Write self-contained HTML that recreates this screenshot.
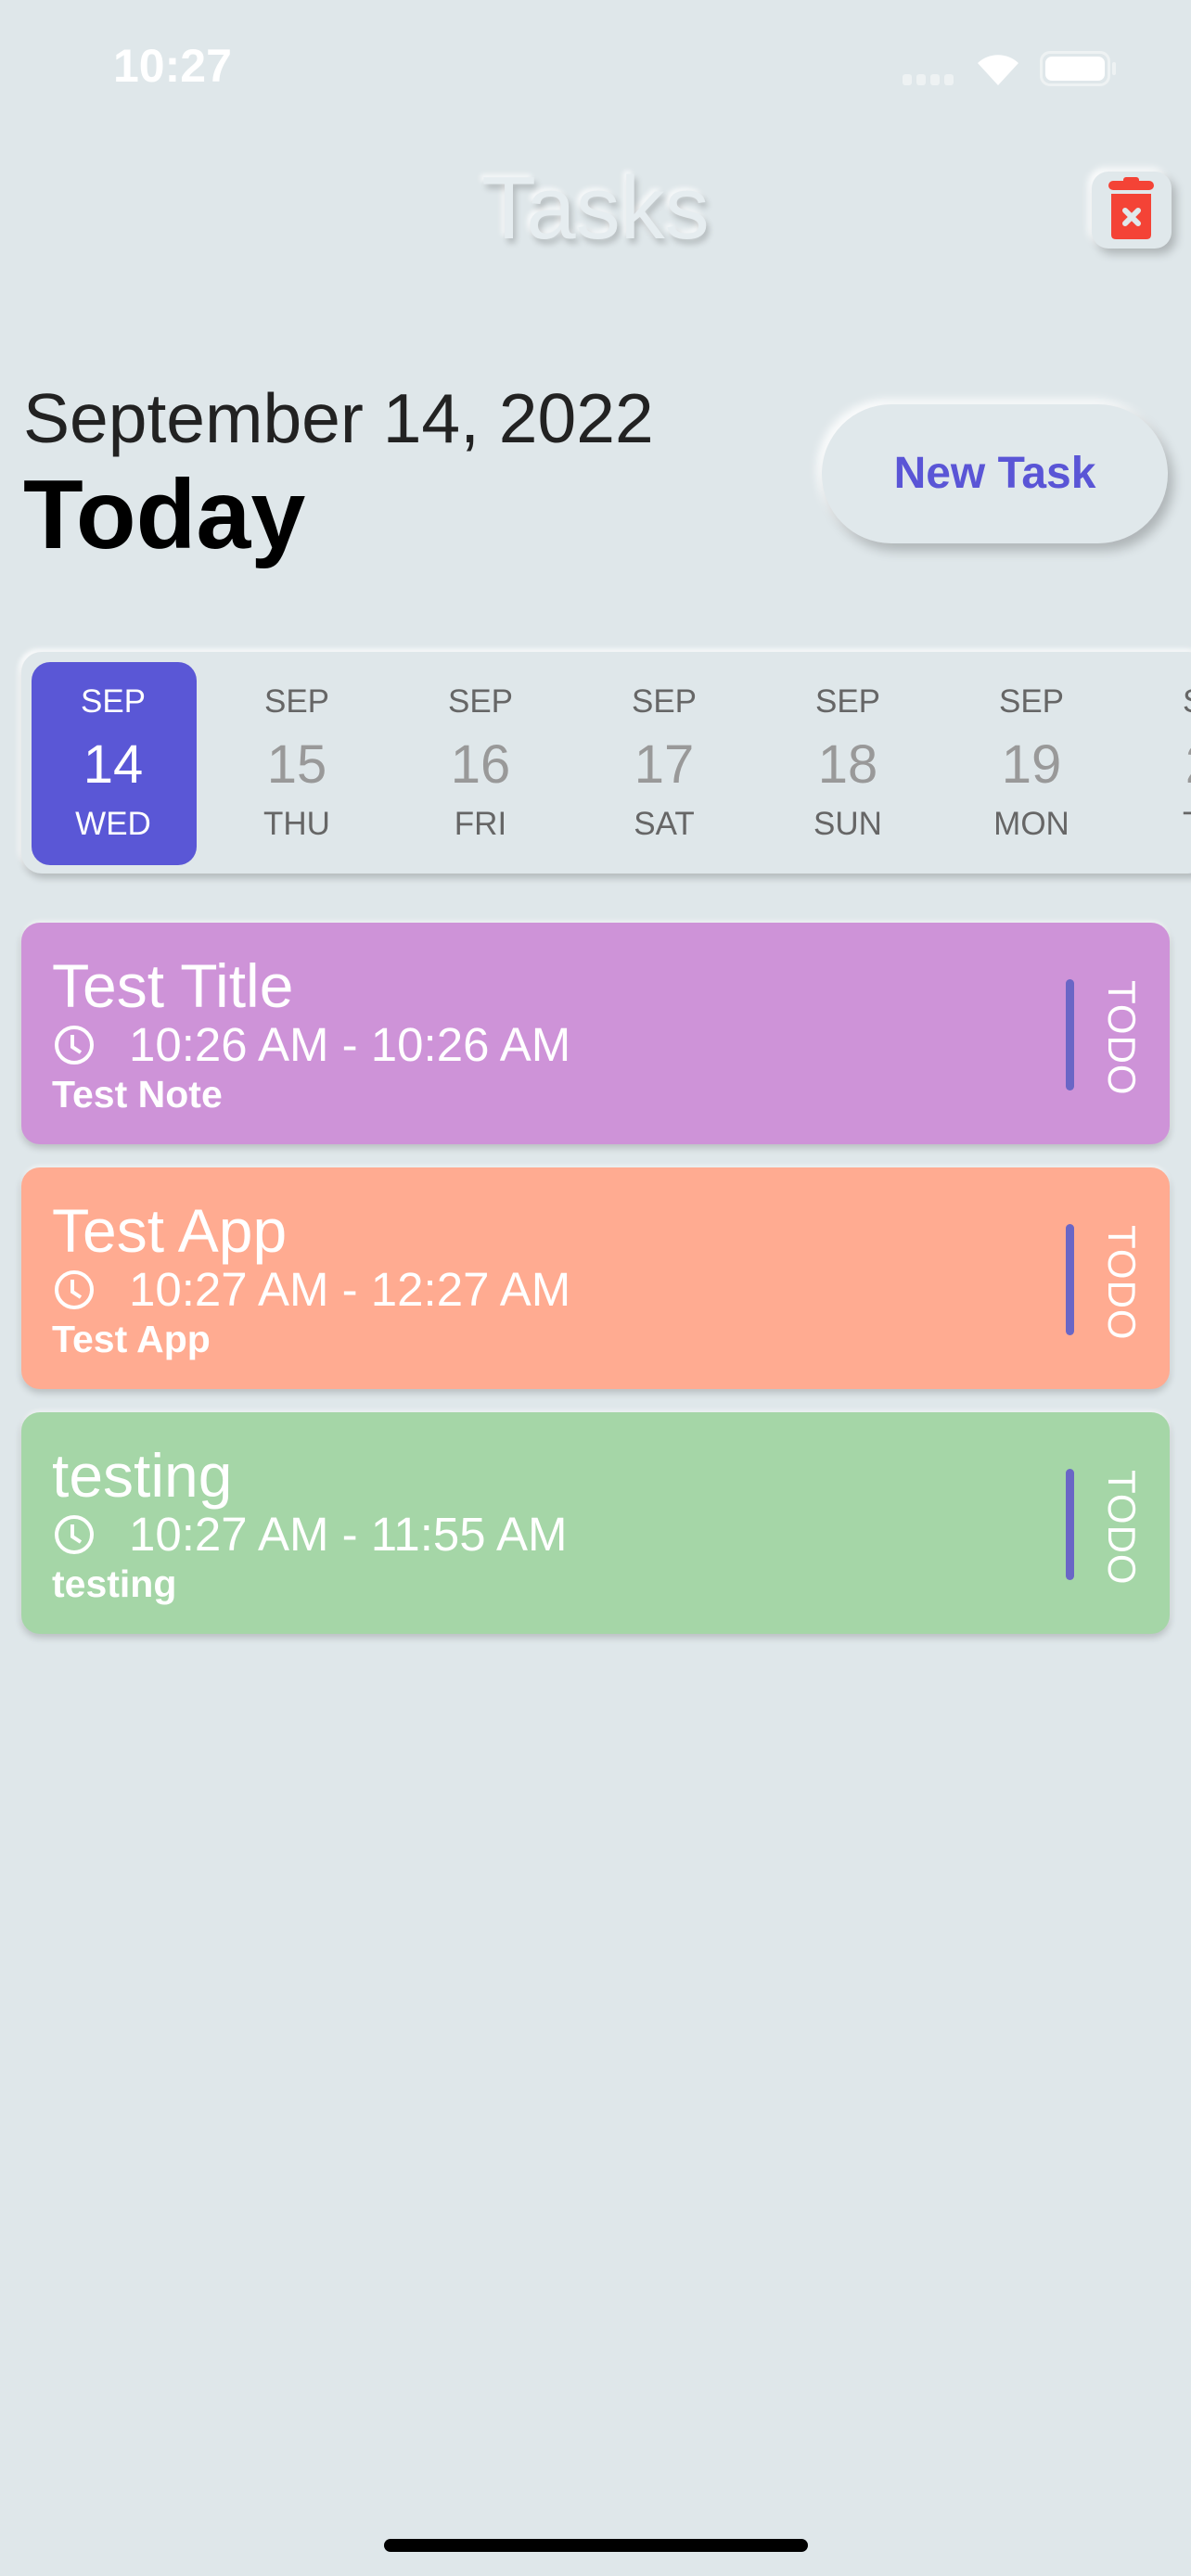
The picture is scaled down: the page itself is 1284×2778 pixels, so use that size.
<!DOCTYPE html>
<html><head><meta charset="utf-8"><style>
*{margin:0;padding:0;box-sizing:border-box}
body{width:1284px;height:2778px;background:#dfe7ea;font-family:"Liberation Sans",sans-serif;position:relative;overflow:hidden}
.a{position:absolute;white-space:nowrap}
.card{position:absolute;left:23px;width:1238px;height:239px;border-radius:20px;box-shadow:0 4px 8px rgba(0,0,0,.18),0 -2px 4px rgba(255,255,255,.7);color:#fff}
.card .t{position:absolute;left:33px;top:31px;font-size:66px;line-height:74px}
.card .tm{position:absolute;left:116px;top:102px;font-size:51px;line-height:60px}
.card .n{position:absolute;left:33px;top:160px;font-size:41px;line-height:50px;font-weight:bold}
.card svg{position:absolute;left:35px;top:110px}
.card .bar{position:absolute;left:1126px;top:61px;width:9px;height:120px;border-radius:5px;background:#6a66c6}
.card .todo{position:absolute;left:1128px;top:100px;width:116px;height:40px;font-size:42px;line-height:40px;transform:rotate(90deg);text-align:center;letter-spacing:1px}
.col{position:absolute;top:703px;width:198px;text-align:center}
.col .m{position:absolute;top:34px;width:100%;font-size:35px;color:#666}
.col .d{position:absolute;top:88px;width:100%;font-size:58px;color:#999}
.col .w{position:absolute;top:166px;width:100%;font-size:35px;color:#666}
</style></head><body>
<div class="a" style="left:122px;top:42px;font-size:50px;color:#fff;font-weight:bold">10:27</div>
<div class="a" style="left:973px;top:80px;width:58px;height:12px;">
<span style="position:absolute;left:0;top:0;width:10px;height:12px;border-radius:3px;background:#eef2f3"></span>
<span style="position:absolute;left:15px;top:0;width:10px;height:12px;border-radius:3px;background:#eef2f3"></span>
<span style="position:absolute;left:30px;top:0;width:10px;height:12px;border-radius:3px;background:#eef2f3"></span>
<span style="position:absolute;left:45px;top:0;width:10px;height:12px;border-radius:3px;background:#eef2f3"></span></div>
<svg class="a" style="left:1050px;top:52px" width="52" height="42" viewBox="0 0 52 42"><path d="M26 40 L4 16 A32 32 0 0 1 48 16 Z" fill="#fff"/></svg>
<div class="a" style="left:1121px;top:55px;width:76px;height:38px;border:3px solid #eef2f3;border-radius:11px"><div style="position:absolute;left:3px;top:3px;right:3px;bottom:3px;background:#fff;border-radius:7px"></div></div>
<div class="a" style="left:1199px;top:67px;width:4px;height:14px;background:#eef2f3;border-radius:2px"></div>

<div class="a" style="left:0;width:1284px;text-align:center;top:170px;font-size:96px;color:#e6edf0;text-shadow:3px 5px 7px rgba(0,0,0,.2),-3px -3px 6px rgba(255,255,255,.8)">Tasks</div>
<div class="a" style="left:1177px;top:185px;width:86px;height:83px;border-radius:18px;background:#e0e8eb;box-shadow:5px 6px 10px rgba(0,0,0,.22),-4px -4px 8px rgba(255,255,255,.9)">
<svg width="86" height="83" viewBox="0 0 86 83"><rect x="18" y="10" width="49" height="10" rx="5" fill="#f44336"/><rect x="34" y="6" width="17" height="8" rx="3" fill="#f44336"/><path d="M21 24 H64 V68 Q64 73 59 73 H26 Q21 73 21 68 Z" fill="#f44336"/><path d="M36 42 L50 56 M50 42 L36 56" stroke="#e0e8eb" stroke-width="6" stroke-linecap="round"/></svg></div>

<div class="a" style="left:25px;top:408px;font-size:75px;color:#222">September 14, 2022</div>
<div class="a" style="left:25px;top:495px;font-size:106px;font-weight:bold;color:#000">Today</div>
<div class="a" style="left:886px;top:436px;width:373px;height:150px;border-radius:75px;background:#e0e8eb;box-shadow:6px 8px 12px rgba(0,0,0,.22),-5px -5px 10px rgba(255,255,255,.9);text-align:center;line-height:150px;font-size:48px;font-weight:bold;color:#5a55d6">New Task</div>

<div class="a" style="left:23px;top:703px;width:1280px;height:239px;border-radius:22px;background:#dfe7ea;box-shadow:2px 5px 8px rgba(0,0,0,.2),-3px -3px 6px rgba(255,255,255,.9)"></div>
<div class="a" style="left:34px;top:714px;width:178px;height:219px;border-radius:20px;background:#5a57d6"></div>
<div class="col" style="left:23px"><div class="m" style="color:#fff">SEP</div><div class="d" style="color:#fff">14</div><div class="w" style="color:#fff">WED</div></div>
<div class="col" style="left:221px"><div class="m">SEP</div><div class="d">15</div><div class="w">THU</div></div>
<div class="col" style="left:419px"><div class="m">SEP</div><div class="d">16</div><div class="w">FRI</div></div>
<div class="col" style="left:617px"><div class="m">SEP</div><div class="d">17</div><div class="w">SAT</div></div>
<div class="col" style="left:815px"><div class="m">SEP</div><div class="d">18</div><div class="w">SUN</div></div>
<div class="col" style="left:1013px"><div class="m">SEP</div><div class="d">19</div><div class="w">MON</div></div>
<div class="col" style="left:1211px"><div class="m">SEP</div><div class="d">20</div><div class="w">TUE</div></div>

<div class="card" style="top:995px;background:#ce93d8">
<div class="t">Test Title</div>
<svg width="44" height="44" viewBox="0 0 44 44"><circle cx="22" cy="22" r="19" fill="none" stroke="#fff" stroke-width="4"/><path d="M20 11 V24 L29 30" fill="none" stroke="#fff" stroke-width="4"/></svg>
<div class="tm">10:26 AM - 10:26 AM</div><div class="n">Test Note</div><div class="bar"></div><div class="todo">TODO</div></div>

<div class="card" style="top:1259px;background:#ffab91">
<div class="t">Test App</div>
<svg width="44" height="44" viewBox="0 0 44 44"><circle cx="22" cy="22" r="19" fill="none" stroke="#fff" stroke-width="4"/><path d="M20 11 V24 L29 30" fill="none" stroke="#fff" stroke-width="4"/></svg>
<div class="tm">10:27 AM - 12:27 AM</div><div class="n">Test App</div><div class="bar"></div><div class="todo">TODO</div></div>

<div class="card" style="top:1523px;background:#a5d6a7">
<div class="t">testing</div>
<svg width="44" height="44" viewBox="0 0 44 44"><circle cx="22" cy="22" r="19" fill="none" stroke="#fff" stroke-width="4"/><path d="M20 11 V24 L29 30" fill="none" stroke="#fff" stroke-width="4"/></svg>
<div class="tm">10:27 AM - 11:55 AM</div><div class="n">testing</div><div class="bar"></div><div class="todo">TODO</div></div>

<div class="a" style="left:414px;top:2738px;width:457px;height:14px;border-radius:7px;background:#000"></div>
</body></html>
